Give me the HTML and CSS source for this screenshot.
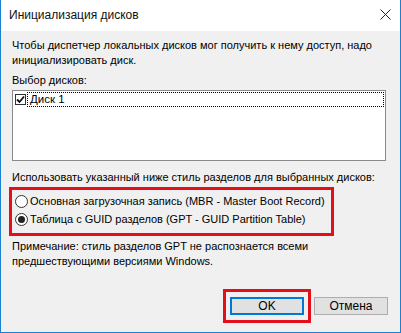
FILE: index.html
```html
<!DOCTYPE html>
<html lang="ru">
<head>
  <meta charset="UTF-8">
  <title>Инициализация дисков</title>
  <link rel="stylesheet" href="styles.css">
</head>
<body>
  <div class="window">
    <div class="titlebar">
      <span class="title">Инициализация дисков</span>
      <svg class="close" width="11" height="11" viewBox="0 0 11 11">
        <path d="M0.5 0.5 L10.5 10.5 M10.5 0.5 L0.5 10.5" stroke="#222" stroke-width="1" fill="none"/>
      </svg>
    </div>
    <div class="content">
      <p class="intro">Чтобы диспетчер локальных дисков мог получить к нему доступ, надо<br>инициализировать диск.</p>
      <div class="label">Выбор дисков:</div>
      <div class="listbox">
        <div class="item">
          <span class="check">
            <svg width="9" height="9" viewBox="0 0 9 9"><path d="M1 4.5 L3.5 7 L8 1.5" stroke="#111" stroke-width="1.8" fill="none"/></svg>
          </span>
          <span class="item-text">Диск 1</span>
        </div>
      </div>
      <div class="label label-style">Использовать указанный ниже стиль разделов для выбранных дисков:</div>
      <div class="choices highlight">
        <div class="radio-row"><span class="radio"></span>Основная загрузочная запись (MBR - Master Boot Record)</div>
        <div class="radio-row"><span class="radio checked"></span>Таблица с GUID разделов (GPT - GUID Partition Table)</div>
      </div>
      <p class="note">Примечание: стиль разделов GPT не распознается всеми<br>предшествующими версиями Windows.</p>
      <div class="buttons">
        <div class="highlight ok-wrap"><button class="btn btn-default">OK</button></div>
        <button class="btn">Отмена</button>
      </div>
    </div>
  </div>
</body>
</html>
```

FILE: styles.css
```css
body {
  margin: 0;
  font-family: 'Liberation Sans', Arial, sans-serif;
  font-size: 11px;
  color: #000;
}

.window {
  width: 401px;
  height: 333px;
  box-sizing: border-box;
  border: 1px solid #1c7fd0;
  border-top: none;
  display: flex;
  flex-direction: column;
}

.titlebar {
  height: 31px;
  background: #fff;
  display: flex;
  align-items: center;
  justify-content: space-between;
  padding: 0 9px 2px 8px;
  box-sizing: border-box;
  flex-shrink: 0;
}

.title {
  font-size: 12px;
  color: #111;
}

.content {
  flex: 1;
  background: #f0f0f0;
  padding: 7px 14px 0 11px;
  line-height: 15px;
  white-space: nowrap;
}

.intro {
  margin: 0;
}

.label {
  margin-top: 5px;
}

.listbox {
  margin-top: 2px;
  height: 71px;
  background: #fff;
  border: 1px solid #8a8a8a;
  box-sizing: border-box;
  padding: 1px 1px 0 2px;
}

.item {
  display: flex;
  align-items: center;
  height: 15px;
}

.check {
  width: 9px;
  height: 9px;
  border: 1px solid #333;
  background: #fff;
  display: flex;
  align-items: center;
  justify-content: center;
  flex-shrink: 0;
}

.item-text {
  flex: 1;
  margin-left: 1px;
  padding-left: 2px;
  border: 1px dotted #000;
  line-height: 13px;
  font-size: 11.5px;
}

.label-style {
  margin-top: 9px;
}

.highlight {
  border: 3px solid #e3101c;
}

.choices {
  margin: 2px 52px 0 -3px;
  padding: 2px 4px 5px 3px;
}

.radio-row {
  display: flex;
  align-items: center;
  height: 18px;
}

.radio {
  width: 11px;
  height: 11px;
  border: 1px solid #333;
  border-radius: 50%;
  background: #fff;
  margin-right: 2px;
  display: flex;
  align-items: center;
  justify-content: center;
  flex-shrink: 0;
}

.radio.checked::after {
  content: "";
  width: 7px;
  height: 7px;
  border-radius: 50%;
  background: #222;
}

.note {
  margin: 3px 0 0;
}

.buttons {
  display: flex;
  justify-content: flex-end;
  align-items: center;
  gap: 3px;
  margin-top: 20px;
  margin-right: -2px;
}

.ok-wrap {
  padding: 5px 4px;
}

.btn {
  width: 74px;
  height: 18px;
  font-family: inherit;
  font-size: 12px;
  background: #e1e1e1;
  border: 1px solid #adadad;
  padding: 0;
  color: #000;
}

.btn-default {
  border: 2px solid #0078d7;
}
```
